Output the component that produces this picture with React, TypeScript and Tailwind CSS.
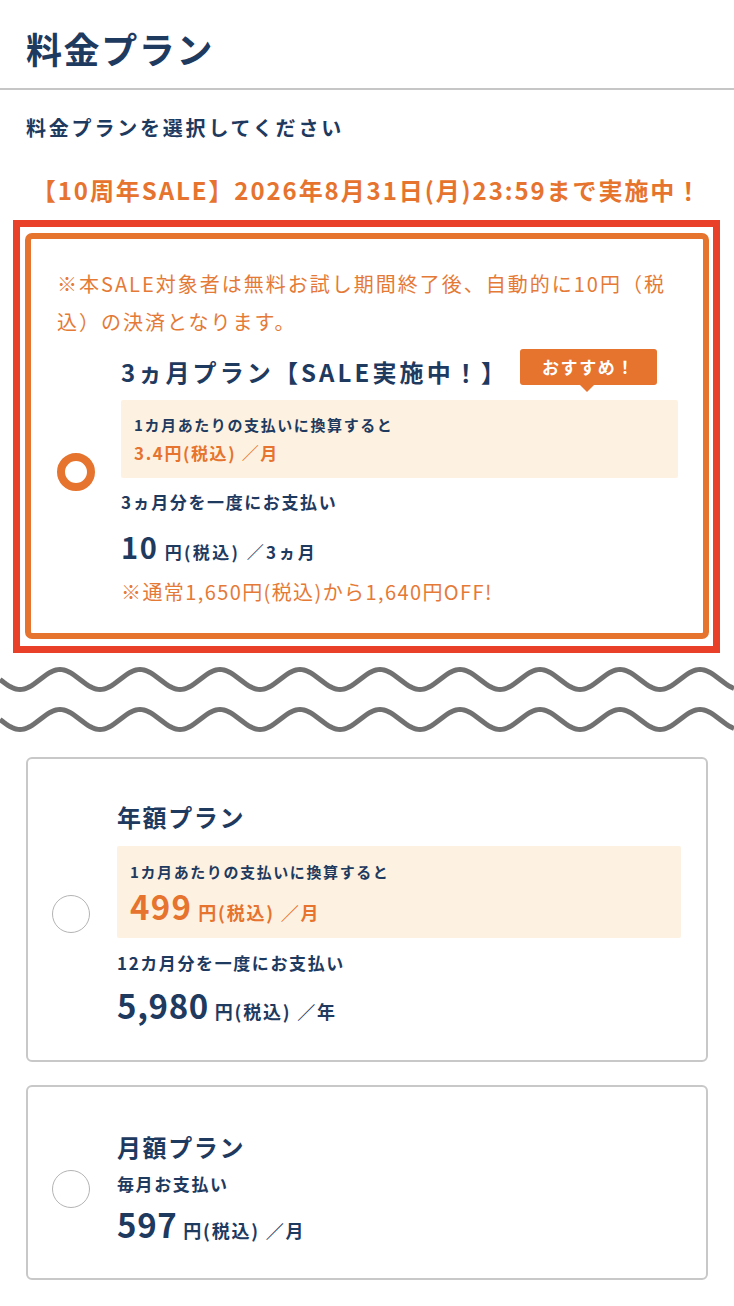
import React from 'react';

const navy = 'text-[#1f3a5f]';

function wavePath(cy: number) {
    let d = '';
    for (let x = 0; x <= 734; x += 2) {
        const y = cy - 10 * Math.sin((2 * Math.PI * (x - 40)) / 80);
        d += (x === 0 ? 'M' : 'L') + x + ' ' + y.toFixed(2) + ' ';
    }
    return d;
}

function Waves() {
    return (
        <svg width="734" height="80" viewBox="0 0 734 80" className="block -mx-[26px] mt-[7px]">
            <path d={wavePath(19.5)} fill="none" stroke="#717171" strokeWidth="5" />
            <path d={wavePath(59.5)} fill="none" stroke="#717171" strokeWidth="5" />
        </svg>
    );
}

function EmptyRadio() {
    return <div className="w-[38px] h-[38px] shrink-0 rounded-full border-[1.5px] border-[#b4b4b4] bg-white" />;
}

export default function App() {
    return (
        <div className="w-[734px] min-h-[1306px] bg-white font-['Noto_Sans_CJK_JP',sans-serif] tracking-[0.1em]">
            {/* Header */}
            <div className="px-[26px] pt-[24px] pb-[16px]">
                <h1 className={`text-[36px] leading-[48px] font-bold ${navy}`}>料金プラン</h1>
            </div>
            <div className="h-[2px] bg-[#c6c6c6]" />

            <div className="px-[26px]">
                <p className={`mt-[24px] text-[20px] leading-[28px] font-bold ${navy} tracking-[0.14em]`}>料金プランを選択してください</p>
                <p className="mt-[32px] text-center text-[24px] leading-[32px] font-bold text-[#e6732e] tracking-[0.08em]">
                    【10周年SALE】2026年8月31日(月)23:59まで実施中！
                </p>

                {/* Selected plan, highlighted */}
                <div className="mt-[14px] -ml-[13px] -mr-[12px] border-[7px] border-[#e9402a] pt-[6px] pb-[7px] pl-[5px] pr-[4px]">
                    <div className="rounded-[7px] border-[6px] border-[#e6732e] bg-white pt-[26px] pb-[25px] pl-[26px] pr-[25px]">
                        <p className="text-[20px] leading-[38px] text-[#e57a37] tracking-[0.1em]">
                            ※本SALE対象者は無料お試し期間終了後、自動的に10円（税込）の決済となります。
                        </p>
                        <div className="mt-[15px] flex items-start gap-[26px]">
                            <div className="mt-[97px] w-[38px] h-[38px] shrink-0 rounded-full border-[8px] border-[#e6732e]" />
                            <div className="relative flex-1">
                                <div className="absolute right-[21px] -top-[7px] h-[36px] w-[137px] rounded-[3px] bg-[#e6732e] flex items-center justify-center text-white text-[17px] font-bold">
                                    おすすめ！
                                    <span className="absolute left-[60px] -bottom-[7px] w-0 h-0 border-l-[7px] border-r-[7px] border-t-[7px] border-l-transparent border-r-transparent border-t-[#e6732e]" />
                                </div>
                                <h2 className={`text-[24px] leading-[32px] font-bold ${navy} tracking-[0.13em]`}>3ヵ月プラン【SALE実施中！】</h2>
                                <div className="mt-[12px] rounded-[2px] bg-[#fdf2e1] pt-[14px] pb-[13px] px-[13px]">
                                    <p className={`text-[15px] leading-[22px] font-bold ${navy}`}>1カ月あたりの支払いに換算すると</p>
                                    <p className="mt-[5px] text-[17px] leading-[24px] font-bold text-[#e6732e]">3.4円(税込) ／月</p>
                                </div>
                                <p className={`mt-[11px] text-[17px] leading-[26px] font-bold ${navy}`}>3ヵ月分を一度にお支払い</p>
                                <p className={`mt-[11px] text-[29px] leading-[40px] font-bold ${navy}`}>
                                    10
                                    <span className="text-[17px] leading-none tracking-[0.14em]"> 円(税込) ／3ヵ月</span>
                                </p>
                                <p className="mt-[10px] text-[20px] leading-[32px] text-[#e57a37] tracking-[0.07em]">
                                    ※通常1,650円(税込)から1,640円OFF!
                                </p>
                            </div>
                        </div>
                    </div>
                </div>

                <Waves />

                {/* Annual plan */}
                <div className="mt-[17px] rounded-[6px] border-2 border-[#c8c8c8] flex items-center gap-[27px] pl-[24px] pr-[25px] pt-[42px] pb-[33px]">
                    <EmptyRadio />
                    <div className="flex-1">
                        <h2 className={`text-[24px] leading-[32px] font-bold ${navy}`}>年額プラン</h2>
                        <div className="mt-[13px] rounded-[2px] bg-[#fdf2e1] pt-[15px] pb-[12px] px-[13px]">
                            <p className={`text-[15px] leading-[22px] font-bold ${navy}`}>1カ月あたりの支払いに換算すると</p>
                            <p className="mt-[3px] text-[33px] leading-[40px] font-bold text-[#e6732e] tracking-[0.04em]">
                                499
                                <span className="text-[18px] leading-none tracking-[0.1em]"> 円(税込) ／月</span>
                            </p>
                        </div>
                        <p className={`mt-[12px] text-[17px] leading-[26px] font-bold ${navy}`}>12カ月分を一度にお支払い</p>
                        <p className={`mt-[7px] text-[33px] leading-[44px] font-bold ${navy} tracking-[0.02em]`}>
                            5,980
                            <span className="text-[18px] leading-none tracking-[0.1em]"> 円(税込) ／年</span>
                        </p>
                    </div>
                </div>

                {/* Monthly plan */}
                <div className="mt-[23px] rounded-[6px] border-2 border-[#c8c8c8] flex items-center gap-[27px] pl-[24px] pr-[25px] pt-[44px] pb-[32px]">
                    <EmptyRadio />
                    <div className="flex-1">
                        <h2 className={`text-[24px] leading-[32px] font-bold ${navy}`}>月額プラン</h2>
                        <p className={`mt-[8px] text-[17px] leading-[26px] font-bold ${navy}`}>毎月お支払い</p>
                        <p className={`mt-[5px] text-[33px] leading-[44px] font-bold ${navy} tracking-[0.02em]`}>
                            597
                            <span className="text-[18px] leading-none tracking-[0.1em]"> 円(税込) ／月</span>
                        </p>
                    </div>
                </div>
            </div>
        </div>
    );
}
